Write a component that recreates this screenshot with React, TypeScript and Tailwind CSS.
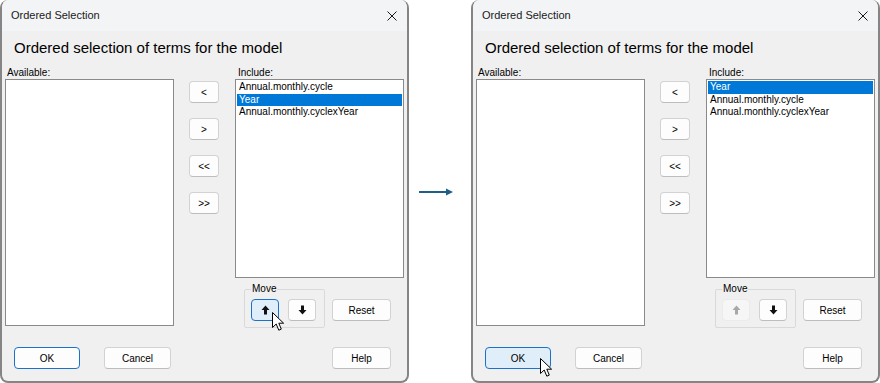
import type { ReactNode } from "react"

const font = { fontFamily: '"Liberation Sans", Arial, sans-serif' }

const beforeItems = ["Annual.monthly.cycle", "Year", "Annual.monthly.cyclexYear"]
const afterItems = ["Year", "Annual.monthly.cycle", "Annual.monthly.cyclexYear"]

function Cursor({ className }: { className: string }) {
  return (
    <svg className={className} width="13" height="20" viewBox="0 0 13 20">
      <path
        d="M0.5 0.5 L0.5 15.5 L4.2 12 L6.8 18.2 L9.3 17.1 L6.8 11.2 L11.6 11.2 Z"
        fill="white"
        stroke="black"
        strokeWidth="1"
        strokeLinejoin="round"
      />
    </svg>
  )
}

function MoveArrow({ down, disabled }: { down?: boolean; disabled?: boolean }) {
  return (
    <svg width="9" height="10" viewBox="0 0 9 10" className={down ? "rotate-180" : ""}>
      <path d="M4.5 0.5 L8.5 5 H6 V9.5 H3 V5 H0.5 Z" fill={disabled ? "#a8a8a8" : "#111"} />
    </svg>
  )
}

function Button({
  children,
  className = "",
  tone = "normal",
}: {
  children: ReactNode
  className?: string
  tone?: "normal" | "default" | "hover" | "disabled"
}) {
  const toneClass = {
    normal: "bg-[#fdfdfd] border-[#d2d2d2] border-b-[#bdbdbd]",
    default: "bg-[#fdfdfd] border-[#1a73c8]",
    hover: "bg-[#e0eef9] border-[#1a73c8]",
    disabled: "bg-[#f6f6f6] border-[#ebebeb]",
  }[tone]
  return (
    <div
      className={`relative flex h-[22px] items-center justify-center rounded-[4px] border text-[10px] text-black ${toneClass} ${className}`}
    >
      {children}
    </div>
  )
}

function ListBox({ items, selected, className }: { items: string[]; selected: string; className: string }) {
  return (
    <div className={`border border-[#8a8a8a] bg-white p-px ${className}`}>
      {items.map((item) => (
        <div
          key={item}
          className={`pl-[2px] text-[10px] leading-[12.5px] ${
            item === selected ? "bg-[#0078d7] text-white" : "text-black"
          }`}
        >
          {item}
        </div>
      ))}
    </div>
  )
}

function Dialog({ after }: { after?: boolean }) {
  return (
    <div className="flex h-[383px] w-[409px] shrink-0 flex-col overflow-hidden rounded-[8px] border-x-2 border-b-2 border-[#858585] bg-[#f0f0f0]">
      {/* Title bar */}
      <div className="flex h-[31px] items-center justify-between bg-[#f3f4f5] pl-[9px] pr-[10px]">
        <span className="text-[11px] text-[#1a1a1a]">Ordered Selection</span>
        <svg width="10" height="10" viewBox="0 0 10 10">
          <path d="M0.5 0.5 L9.5 9.5 M9.5 0.5 L0.5 9.5" stroke="#1a1a1a" strokeWidth="1" />
        </svg>
      </div>

      <div className="mt-[7px] pl-[12px] text-[15px] leading-[20px] text-black">
        Ordered selection of terms for the model
      </div>

      {/* Main row */}
      <div className="mt-[8px] flex items-start pl-[3px]">
        <div className="flex w-[169px] flex-col">
          <div className="h-[13px] pl-[2px] text-[10px] leading-[13px] text-black">Available:</div>
          <div className="h-[247px] border border-[#8a8a8a] bg-white" />
        </div>

        <div className="ml-[15px] flex w-[30px] flex-col gap-[15px] pt-[15px]">
          <Button>&lt;</Button>
          <Button>&gt;</Button>
          <Button>&lt;&lt;</Button>
          <Button>&gt;&gt;</Button>
        </div>

        <div className="ml-[16px] flex w-[169px] flex-col">
          <div className="h-[13px] pl-[3px] text-[10px] leading-[13px] text-black">Include:</div>
          <ListBox
            className="h-[199px]"
            items={after ? afterItems : beforeItems}
            selected="Year"
          />
          <div className="mt-[11px] flex items-start">
            <div className="relative ml-[9px] h-[39px] w-[81px] rounded-[2px] border border-[#d9d9d9]">
              <span className="absolute -top-[7px] left-[6px] bg-[#f0f0f0] px-px text-[10px] leading-[12px] text-black">
                Move
              </span>
              <div className="flex gap-[9px] pl-[6px] pt-[9px]">
                <Button className="w-[28px]" tone={after ? "disabled" : "hover"}>
                  <MoveArrow disabled={after} />
                  {!after && <Cursor className="absolute left-[20px] top-[12px]" />}
                </Button>
                <Button className="w-[28px]">
                  <MoveArrow down />
                </Button>
              </div>
            </div>
            <Button className="ml-[7px] mt-[10px] w-[59px]">Reset</Button>
          </div>
        </div>
      </div>

      {/* Bottom buttons */}
      <div className="mt-[19px] flex">
        <Button className="ml-[12px] w-[66px]" tone={after ? "hover" : "default"}>
          OK
          {after && <Cursor className="absolute left-[54px] top-[10px]" />}
        </Button>
        <Button className="ml-[24px] w-[67px]">Cancel</Button>
        <Button className="ml-auto mr-[16px] w-[59px]">Help</Button>
      </div>
    </div>
  )
}

export default function App() {
  return (
    <div className="flex h-[383px] w-[880px] items-start overflow-hidden bg-white" style={font}>
      <Dialog />
      <div className="w-[62px] shrink-0 pl-[10px] pt-[188px]">
        <svg width="34" height="8" viewBox="0 0 34 8">
          <path d="M0 4 H28" stroke="#1e5f88" strokeWidth="2" />
          <path d="M27 0.5 L34 4 L27 7.5 Z" fill="#1e5f88" />
        </svg>
      </div>
      <Dialog after />
    </div>
  )
}
